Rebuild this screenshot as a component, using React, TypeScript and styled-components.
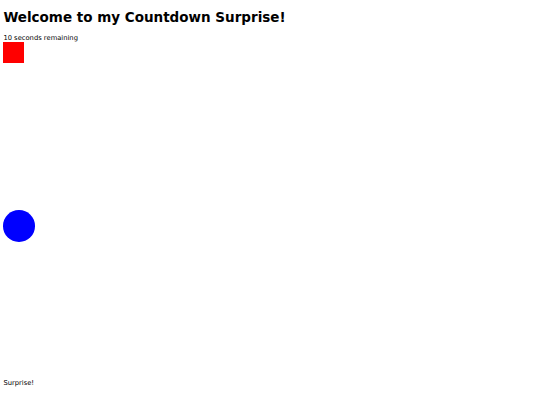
import React from "react";
import styled, { createGlobalStyle } from "styled-components";

const Global = createGlobalStyle`
  html, body { margin: 0; padding: 0; background: #fff; }
  body { font-family: "DejaVu Sans", Verdana, sans-serif; color: #000; }
`;

/* The reference is a 1280x960 page photographed at 540x405, so the page is zoomed by 540/1280. */
const Page = styled.div`
  zoom: 0.421875;
  display: flex;
  flex-direction: column;
  align-items: flex-start;
  padding: 0 8px;
  font-size: 16px;
`;

const Title = styled.h1`
  margin: 21px 0;
  font-size: 32px;
  font-weight: bold;
`;

const Countdown = styled.div`
  font-size: 16px;
`;

const Square = styled.div`
  margin-top: 1px;
  width: 50px;
  height: 50px;
  background: #ff0000;
`;

const Ball = styled.div`
  margin-top: 348px;
  width: 75px;
  height: 75px;
  border-radius: 50%;
  background: #0000ff;
`;

const Message = styled.div`
  margin-top: 325px;
  font-size: 16px;
`;

export default function App() {
  return (
    <>
      <Global />
      <Page>
        <Title>Welcome to my Countdown Surprise!</Title>
        <Countdown>10 seconds remaining</Countdown>
        <Square />
        <Ball />
        <Message>Surprise!</Message>
      </Page>
    </>
  );
}
